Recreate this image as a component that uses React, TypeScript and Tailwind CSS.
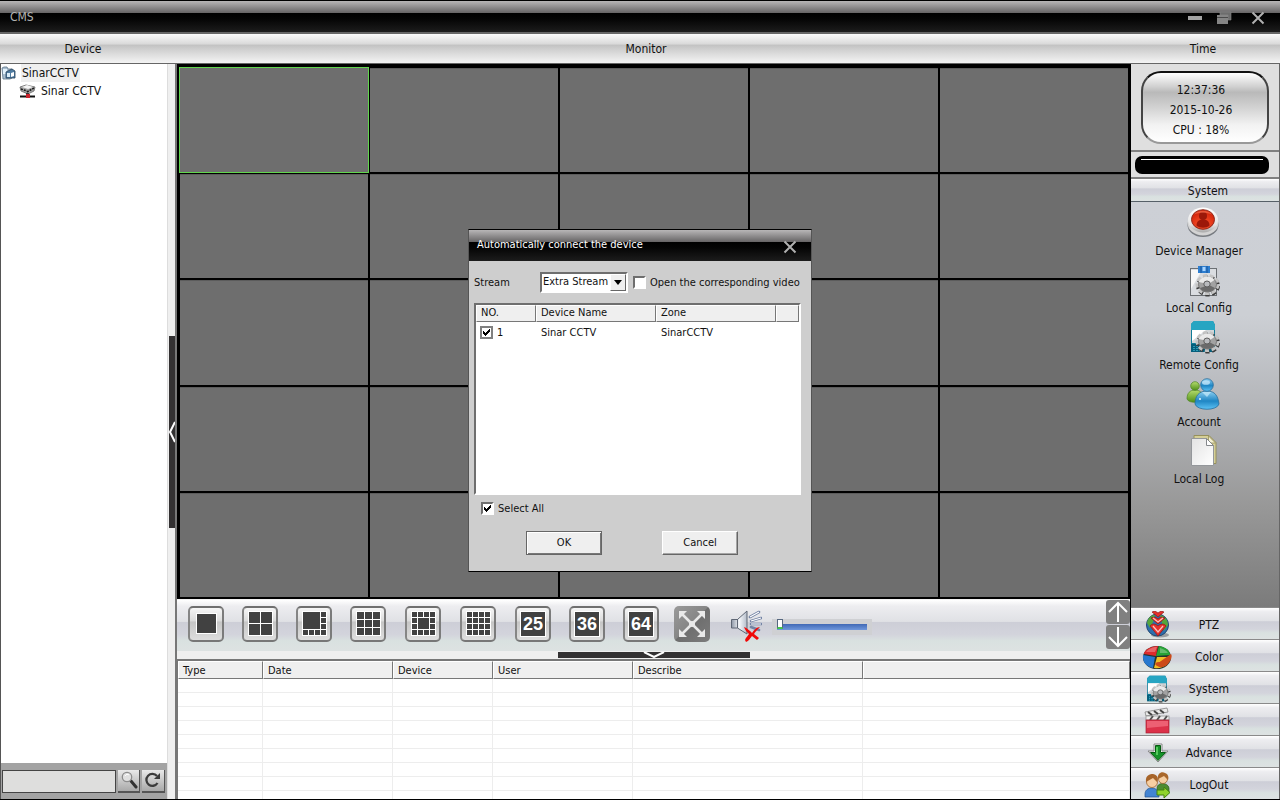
import type { ReactNode } from "react";

const steel =
  "bg-[linear-gradient(to_bottom,#ffffff_0%,#ededf0_12%,#e0e1e5_42%,#cdced7_44%,#d3d4dc_68%,#d9e1e0_80%,#dde2e2_100%)]";

function Check({ id, on = false, tone = "sunken" }: { id: string; on?: boolean; tone?: "sunken" | "flat" }) {
  const edge =
    tone === "flat"
      ? "border-2 border-[#808080]"
      : "border-2 border-t-[#6e6e6e] border-l-[#6e6e6e] border-r-white border-b-white";
  return (
    <span className="relative inline-flex h-[13px] w-[13px] shrink-0">
      <input
        id={id}
        type="checkbox"
        defaultChecked={on}
        className={"peer h-[13px] w-[13px] appearance-none bg-white " + edge}
      />
      <svg
        viewBox="0 0 13 13"
        shapeRendering="crispEdges"
        className="pointer-events-none absolute inset-0 hidden h-[13px] w-[13px] peer-checked:block"
      >
        <path d="M3 5h1v1h1v1h1v-1h1v-1h1v-1h1v-1h1v3h-1v1h-1v1h-1v1h-1v1h-1v-1h-1v-1h-1z" fill="#000" />
      </svg>
    </span>
  );
}

function DeviceManagerIcon() {
  return (
    <svg viewBox="0 0 34 34" className="h-[34px] w-[34px]">
      <defs>
        <linearGradient id="dmRing" x1="0" y1="0" x2="0" y2="1">
          <stop offset="0" stopColor="#fff" />
          <stop offset="0.7" stopColor="#e2e2e2" />
          <stop offset="1" stopColor="#a8a8a8" />
        </linearGradient>
        <radialGradient id="dmRed" cx="0.5" cy="0.75" r="0.7">
          <stop offset="0" stopColor="#ff5a30" />
          <stop offset="1" stopColor="#d02008" />
        </radialGradient>
      </defs>
      <ellipse cx="17" cy="19" rx="15.500" ry="12" fill="#777b80" />
      <ellipse cx="17" cy="17" rx="15.500" ry="12.500" fill="#d3d3d3" />
      <ellipse cx="17" cy="14" rx="15" ry="12.500" fill="url(#dmRing)" />
      <ellipse cx="17" cy="13.500" rx="11.500" ry="9.800" fill="url(#dmRed)" stroke="#8f2a1c" />
      <circle cx="17" cy="10" r="4" fill="#9c1809" />
      <path d="M10.500 19.500c0-4 2.500-6 6.500-6s6.500 2 6.500 6c-3 3-10 3-13 0z" fill="#9c1809" />
      <path d="M8 8.500c3-5 15-5 18 0-5-2.500-13-2.500-18 0z" fill="#ff8a68" opacity="0.5" />
    </svg>
  );
}

function Gear() {
  return (
    <g>
      <ellipse cx="22" cy="23" rx="10" ry="8.500" fill="none" stroke="#3c3c3c" strokeWidth="4" strokeDasharray="4 2.500" />
      <ellipse cx="21.500" cy="21.500" rx="10" ry="8.500" fill="none" stroke="#c4c4c4" strokeWidth="4" strokeDasharray="4 2.500" />
      <ellipse cx="21.500" cy="21.500" rx="9" ry="7.500" fill="#a2a2a2" stroke="#787878" />
      <path d="M12.500 19c2-6 12-8 16-2l-6 4-5-1z" fill="#e9e9e9" />
      <path d="M14 25c3 5 12 5 15 0l-6-3z" fill="#6a6a6a" />
      <ellipse cx="21" cy="21" rx="3.200" ry="3" fill="#b9bbbe" stroke="#5e5e5e" />
    </g>
  );
}

function LocalConfigIcon() {
  return (
    <svg viewBox="0 0 34 34" className="h-[34px] w-[34px]">
      <rect x="4.500" y="5.500" width="26" height="27" fill="#dadde1" stroke="#6c7074" />
      <path d="M5 7h11L5 26z" fill="#f7f7f7" />
      <rect x="14" y="1" width="8" height="4" fill="#c4c9cf" />
      <rect x="12" y="3" width="12" height="7" fill="#2d7ed0" />
      <path d="M15 3v7M21 3v7" stroke="#185398" />
      <rect x="16.500" y="4" width="3" height="4" fill="#a8d4ff" />
      <Gear />
    </svg>
  );
}

function RemoteConfigIcon({ small = false }: { small?: boolean }) {
  return (
    <svg viewBox="0 0 34 34" className={small ? "h-[28px] w-[30px]" : "h-[34px] w-[34px]"}>
      <path d="M5 4l3-3h19l2 4v26H5z" fill="#107c98" />
      <path d="M8 1h19l2 4v5H5V4z" fill="#27a5c2" />
      <path d="M6 10h22v13H6z" fill="#d2d7da" />
      <path d="M6 10h14L6 21z" fill="#fff" />
      <path d="M5 24h23v8H5z" fill="#055f7c" />
      <path d="M8 26v5M11 26v5M14 26v5" stroke="#55d6ee" strokeDasharray="1 1" />
      <Gear />
    </svg>
  );
}

function AccountIcon() {
  return (
    <svg viewBox="0 0 34 34" className="h-[34px] w-[34px]">
      <defs>
        <linearGradient id="acBlue" x1="0" y1="0" x2="0" y2="1">
          <stop offset="0" stopColor="#8fd0f2" />
          <stop offset="0.55" stopColor="#1f86c4" />
          <stop offset="1" stopColor="#5dc3f5" />
        </linearGradient>
        <linearGradient id="acGreen" x1="0" y1="0" x2="0" y2="1">
          <stop offset="0" stopColor="#b5dc6e" />
          <stop offset="1" stopColor="#4f8f17" />
        </linearGradient>
      </defs>
      <path d="M1 22c0-6 3-9 8-9s8 3 8 8c0 5-14 6-16 1z" fill="url(#acGreen)" stroke="#4c8420" strokeWidth="0.700" />
      <circle cx="9" cy="9" r="4.300" fill="url(#acGreen)" stroke="#4c8420" strokeWidth="0.700" />
      <path d="M9 27c0-8 4-13 12-13s11 5 12 13c-2 7-22 7-24 0z" fill="url(#acBlue)" stroke="#276d9c" strokeWidth="0.800" />
      <circle cx="21" cy="8" r="6.300" fill="url(#acBlue)" stroke="#276d9c" strokeWidth="0.800" />
      <ellipse cx="20" cy="5.500" rx="4" ry="2.300" fill="#d4f0ff" opacity="0.700" />
      <path d="M16 15l5 5 4-5z" fill="#c9ebfb" opacity="0.700" />
      <circle cx="14" cy="22" r="1" fill="#e9f8ff" />
    </svg>
  );
}

function LocalLogIcon() {
  return (
    <svg viewBox="0 0 34 34" className="h-[34px] w-[34px]">
      <defs>
        <linearGradient id="logPage" x1="0" y1="0" x2="1" y2="1">
          <stop offset="0" stopColor="#e3e3e3" />
          <stop offset="1" stopColor="#ffffff" />
        </linearGradient>
      </defs>
      <path d="M8 1.500h15l7 7v21H8z" fill="#d5cf97" stroke="#96905c" />
      <path d="M22.500 2v7h7z" fill="#f3f0d2" stroke="#96905c" strokeWidth="0.800" />
      <path d="M5.500 4.500h15l7 7v20h-22z" fill="url(#logPage)" stroke="#94979b" />
      <path d="M20.500 4.500v7h7z" fill="#fff" stroke="#85888c" />
    </svg>
  );
}

function PtzIcon() {
  return (
    <svg viewBox="0 0 28 28" className="h-[28px] w-[30px]">
      <ellipse cx="17" cy="24" rx="9" ry="2.500" fill="#9a9da0" />
      <circle cx="14.500" cy="14" r="11" fill="#2c6fae" stroke="#24476e" />
      <path d="M4 12c1-6 5-8 8-8l-2 7-3 6zM17 4c5 1 8 5 8 10l-4 6-2-8z" fill="#55a53c" />
      <g fill="#e6302c" stroke="#8f1713" strokeWidth="0.700">
        <path d="M9 1l3-1 3 2 3-2 3 1-6 5z" />
        <path d="M8 7l4-1 3 2 3-2 4 1-7 6z" />
        <path d="M7 15c2-3 6-2 8 0 2-2 6-3 8 0l-8 10z" />
      </g>
      <path d="M10 7l5 4 5-4M10 15l5 6 5-6" fill="none" stroke="#ffc1bb" strokeWidth="1.300" />
    </svg>
  );
}

function ColorIcon() {
  return (
    <svg viewBox="0 0 30 28" className="h-[28px] w-[30px]">
      <ellipse cx="15" cy="14.500" rx="14" ry="11.500" fill="#26332f" />
      <path d="M14 13L2 11c0-4 7-8 14-8z" fill="#df2a2c" />
      <path d="M14 13l3-10c6 1 11 4 11 9z" fill="#27a336" />
      <path d="M13 14L1 12c-1 7 4 12 10 13z" fill="#2778cf" />
      <path d="M15 14l-3 11c5 1 10-1 13-4l1-7z" fill="#f0be23" />
      <path d="M13 21c2-3 4-1 6-3l10-7c2 3-1 8-4 11-4 3-9 3-12-1z" fill="#cc4a19" />
      <path d="M4 9c2-3 7-5 11-5l-2 5zM18 5c4 1 7 3 8 5l-8 0z" fill="#fff" opacity="0.280" />
    </svg>
  );
}

function PlaybackIcon() {
  return (
    <svg viewBox="0 0 28 28" className="h-[28px] w-[30px]">
      <path d="M2 5l22-4 1 4L3 9z" fill="#ececec" stroke="#777" strokeWidth="0.700" />
      <path d="M5 5l4 3M11 4l4 3M17 3l4 3" stroke="#444" strokeWidth="2" />
      <rect x="3" y="9" width="23" height="4" fill="#eee" stroke="#888" strokeWidth="0.700" />
      <path d="M7 13l3-4M14 13l3-4M21 13l3-4" stroke="#555" strokeWidth="2" />
      <rect x="3" y="13" width="23" height="13" fill="#dc3149" stroke="#a12334" strokeWidth="0.700" />
      <path d="M4 14h21v5L4 21z" fill="#f47586" opacity="0.700" />
    </svg>
  );
}

function AdvanceIcon() {
  return (
    <svg viewBox="0 0 28 28" className="h-[28px] w-[30px]">
      <path d="M11 5h8v7h6l-10 11L5 12h6z" fill="#f4f4f4" stroke="#888" />
      <path d="M12.500 6.500h5v7h5L15 21.500l-7.500-8h5z" fill="#159229" stroke="#075b12" />
      <path d="M14 8v8" fill="none" stroke="#68dd6c" strokeWidth="1.500" />
    </svg>
  );
}

function LogoutIcon() {
  return (
    <svg viewBox="0 0 28 28" className="h-[28px] w-[30px]">
      <path d="M14 17c0-6 11-6 12 0v4H14z" fill="#4e8b32" stroke="#2e601f" strokeWidth="0.700" />
      <circle cx="20" cy="8" r="4.500" fill="#f5cda0" stroke="#94571d" strokeWidth="0.700" />
      <path d="M15 8c-1-6 4-8 7-6 3 1 4 4 3 7l-4-4z" fill="#a9672b" />
      <path d="M2 23c0-8 13-8 14 0v3H2z" fill="#4285d2" stroke="#235591" strokeWidth="0.700" />
      <circle cx="9" cy="11" r="5.500" fill="#f8cfa3" stroke="#94571d" strokeWidth="0.700" />
      <path d="M3 11c-1-7 4-8 7-8 5 1 6 5 4 8l-4-4z" fill="#a7642a" />
      <path d="M14 19h7v-3l6 5.500-6 5.500v-3h-7z" fill="#8fd32c" stroke="#42810e" />
    </svg>
  );
}

function Frame({ label, children }: { label: string; children: ReactNode }) {
  return (
    <button
      type="button"
      aria-label={label}
      className="flex h-[36px] w-[36px] shrink-0 items-center justify-center rounded-[5px] border-2 border-t-[#6f6f6f] border-r-[#7b7b7b] border-b-[#777] border-l-[#858585] bg-[linear-gradient(to_bottom,#f6f6f6_0%,#dcdcdc_40%,#c6c6c6_44%,#dedede_100%)]"
    >
      {children}
    </button>
  );
}

function SplitIcon({ lines }: { lines: string }) {
  return (
    <svg viewBox="0 0 25 25" shapeRendering="crispEdges" className="h-[25px] w-[25px]">
      <rect x="0.500" y="0.500" width="24" height="24" fill="#414141" stroke="#fff" />
      <path d={lines} stroke="#fff" />
    </svg>
  );
}

function CountFrame({ n }: { n: number }) {
  return (
    <Frame label={`${n} windows`}>
      <span className="flex h-[26px] w-[26px] items-center justify-center border border-white bg-[#414141] font-['Liberation_Sans',sans-serif] text-[18px] leading-[20px] font-bold text-white">
        {n}
      </span>
    </Frame>
  );
}

function SpeakerIcon() {
  return (
    <svg viewBox="0 0 32 32" className="h-[32px] w-[32px]">
      <defs>
        <linearGradient id="spk" x1="0" y1="0" x2="1" y2="0">
          <stop offset="0" stopColor="#8e97a6" />
          <stop offset="0.500" stopColor="#f6f8fb" />
          <stop offset="1" stopColor="#b4bcc9" />
        </linearGradient>
      </defs>
      <path d="M1.500 9.500h6L17 1v23l-9.500-6h-6z" fill="url(#spk)" stroke="#5f6775" />
      <path d="M7.500 9v9" stroke="#5f6775" />
      <path d="M20 7l9-5M21 11l10-3M21 14h10M21 17l8 3" stroke="#7383a4" strokeWidth="2.600" strokeLinecap="round" />
      <path d="M20 7l9-5M21 11l10-3M21 14h10" stroke="#fff" strokeWidth="1.200" />
      <path d="M14 17c3 1 6 4 8 6 2-3 5-6 8-6-3 3-5 5-6 7l5 4-2 2-5-4c-2 2-3 5-6 6l-1-2c1-3 3-4 4-6-2-2-4-4-5-7z" fill="#f00808" />
    </svg>
  );
}

function ArrowButton({ down = false }: { down?: boolean }) {
  return (
    <button
      type="button"
      aria-label={down ? "Next page" : "Previous page"}
      className="flex h-[24px] w-[24px] items-center justify-center rounded-[3px] bg-[#808080]"
    >
      <svg viewBox="0 0 22 22" className="h-[22px] w-[22px]" fill="none" stroke="#fff" strokeWidth="2">
        <path d={down ? "M11 1v18M2 11l9 9 9-9" : "M11 21V3M2 11l9-9 9 9"} />
      </svg>
    </button>
  );
}

const systemItems: { label: string; icon: ReactNode }[] = [
  { label: "Device Manager", icon: <DeviceManagerIcon /> },
  { label: "Local Config", icon: <LocalConfigIcon /> },
  { label: "Remote Config", icon: <RemoteConfigIcon /> },
  { label: "Account", icon: <AccountIcon /> },
  { label: "Local Log", icon: <LocalLogIcon /> },
];

const tabs: { label: string; icon: ReactNode }[] = [
  { label: "PTZ", icon: <PtzIcon /> },
  { label: "Color", icon: <ColorIcon /> },
  { label: "System", icon: <RemoteConfigIcon small /> },
  { label: "PlayBack", icon: <PlaybackIcon /> },
  { label: "Advance", icon: <AdvanceIcon /> },
  { label: "LogOut", icon: <LogoutIcon /> },
];

const headCell =
  "border-t border-l border-t-white border-l-white border-r border-b border-r-[#777] border-b-[#777] bg-[#efefef] pl-[4px] text-left font-normal";

function TitleBar() {
  return (
    <header className="flex h-[32px] shrink-0 items-center justify-between border-t border-black bg-[linear-gradient(to_bottom,#b8b6b7_0px,#666465_12px,#000_12px,#050505_18px,#1c1c1c_31px)] pr-[15px] pl-[10px]">
      <h1 className="text-[12px] leading-[16px] text-[#b4b4b4]">CMS</h1>
      <div className="flex items-center gap-[14px] pt-[2px]">
        <button type="button" aria-label="Minimize">
          <svg viewBox="0 0 16 14" className="h-[14px] w-[16px]">
            <rect x="2" y="5" width="14" height="4" fill="#a3a3a3" />
          </svg>
        </button>
        <button type="button" aria-label="Restore">
          <svg viewBox="0 0 16 14" className="h-[14px] w-[16px]">
            <path d="M4 1h11v8h-3V4H4z" fill="#6d6d6d" stroke="#8c8c8c" strokeWidth="0.600" />
            <rect x="1" y="4" width="11" height="9" fill="#858585" />
            <path d="M1 6.500h11" stroke="#4a4a4a" />
          </svg>
        </button>
        <button type="button" aria-label="Close" className="ml-[5px]">
          <svg viewBox="0 0 14 14" className="h-[14px] w-[14px]">
            <path d="M1.500 1.500l11 11M12.500 1.500l-11 11" stroke="#b0b0b0" strokeWidth="2" />
          </svg>
        </button>
      </div>
    </header>
  );
}

function DevicePanel() {
  return (
    <aside className="flex w-[167px] shrink-0 flex-col border-l border-[#555] bg-white">
      <ul className="flex-1 leading-[18px]">
        <li className="flex items-center gap-1">
          <svg viewBox="0 0 16 16" className="h-[16px] w-[16px]">
            <path d="M1 3l2-1h3l1 2h4v9l-2 1H2z" fill="#a9bfd1" stroke="#5b7186" strokeWidth="0.800" />
            <path d="M2 4h4v5H2z" fill="#e3f1fb" />
            <path d="M5 7l6-3 3 2v7H5z" fill="#4f7ba0" stroke="#29435b" strokeWidth="0.800" />
            <path d="M6 8h3v4H6z" fill="#d9ebf7" />
            <path d="M10 8l3-1v4l-3 1z" fill="#fff" />
          </svg>
          <span className="bg-[#efefef] px-px">SinarCCTV</span>
        </li>
        <li className="flex items-center gap-1 pl-[18px]">
          <svg viewBox="0 0 17 16" className="h-[16px] w-[17px]">
            <path d="M1 4l6-2 9 2-1 4-6 3-7-3z" fill="#a4a4a4" stroke="#666" strokeWidth="0.800" />
            <path d="M3 4l5-2 6 2-5 2z" fill="#f4f4f4" />
            <path d="M2 6l6 2M8 9l7-4" stroke="#1b1b1b" strokeWidth="1.500" strokeDasharray="2 1" />
            <path d="M8.500 10v3" stroke="#333" strokeWidth="3" />
            <path d="M1 13.500h15" stroke="#111" strokeWidth="2" />
            <rect x="7" y="11" width="4" height="4" fill="#c8232c" />
          </svg>
          <span className="px-px">Sinar CCTV</span>
        </li>
      </ul>
      <form className="flex h-[36px] items-center gap-[2px] bg-[#a3a3a3] pr-[2px] pl-px" onSubmit={(e) => e.preventDefault()}>
        <input
          type="text"
          aria-label="Search devices"
          className="h-[23px] min-w-0 flex-1 border border-[#444] bg-[#dededd] px-1"
        />
        <button
          type="submit"
          aria-label="Search"
          className="flex h-[23px] w-[22px] items-center justify-center border-r border-b-2 border-[#555] bg-linear-to-b from-[#e9e9e9] to-[#a9a9a9]"
        >
          <svg viewBox="0 0 18 18" className="h-[18px] w-[18px]">
            <path d="M11 10l5 6" stroke="#333" strokeWidth="3" strokeLinecap="round" />
            <circle cx="7" cy="6" r="4.700" fill="#e0e0e0" stroke="#8c8c8c" strokeWidth="1.300" />
            <path d="M5 5c1-2 3-2 4-1" fill="none" stroke="#fff" />
          </svg>
        </button>
        <button
          type="button"
          aria-label="Refresh"
          className="flex h-[23px] w-[23px] items-center justify-center border-r border-b-2 border-[#555] bg-linear-to-b from-[#e9e9e9] to-[#a9a9a9]"
        >
          <svg viewBox="0 0 18 18" className="h-[18px] w-[18px]">
            <path d="M13.500 12A6 6 0 1 1 13 5" fill="none" stroke="#3c3c3c" strokeWidth="2.300" />
            <path d="M16 2v6h-6z" fill="#3c3c3c" />
          </svg>
        </button>
      </form>
    </aside>
  );
}

function VideoGrid() {
  return (
    <div className="grid min-h-0 flex-1 grid-cols-5 grid-rows-5 gap-[2px] bg-black pt-[4px] pr-[2px] pb-[2px] pl-[3px]">
      {Array.from({ length: 25 }, (_, i) => (
        <div
          key={i}
          className={
            i === 0 ? "bg-[#6e6e6e] outline-1 outline-[#62d64e]" : "border-t border-[#5c5c5c] bg-[#6e6e6e]"
          }
        />
      ))}
    </div>
  );
}

function Toolbar() {
  return (
    <div className={"flex h-[52px] shrink-0 items-start border-t border-[#f4f4f4] pl-[11px] " + steel}>
      <div className="flex flex-1 items-center pt-[5px]">
        <div className="mr-[19px] flex gap-[18px]">
          <Frame label="1 window">
            <span className="h-[21px] w-[21px] border border-white bg-[#414141]" />
          </Frame>
          <Frame label="4 windows">
            <SplitIcon lines="M12.500 1v23M1 12.500h23" />
          </Frame>
          <Frame label="8 windows">
            <SplitIcon lines="M18.500 1v23M1 18.500h23M6.500 18v6M12.500 18v6M18 6.500h6M18 12.500h6" />
          </Frame>
          <Frame label="9 windows">
            <SplitIcon lines="M8.500 1v23M16.500 1v23M1 8.500h23M1 16.500h23" />
          </Frame>
        </div>
        <div className="mr-[18px] flex gap-[19px]">
          <Frame label="13 windows">
            <SplitIcon lines="M6.500 1v23M18.500 1v23M1 6.500h23M1 18.500h23M12.500 1v6M12.500 18v6M1 12.500h6M18 12.500h6" />
          </Frame>
          <Frame label="16 windows">
            <SplitIcon lines="M6.500 1v23M12.500 1v23M18.500 1v23M1 6.500h23M1 12.500h23M1 18.500h23" />
          </Frame>
          <CountFrame n={25} />
        </div>
        <div className="mr-[15px] flex gap-[18px]">
          <CountFrame n={36} />
          <CountFrame n={64} />
        </div>
        <button
          type="button"
          aria-label="Full screen"
          className="flex h-[36px] w-[36px] items-center justify-center rounded-[5px] bg-[linear-gradient(135deg,#9a9a9a_0%,#868686_48%,#6e6e6e_50%,#7c7c7c_100%)]"
        >
          <svg viewBox="0 0 30 30" className="h-[30px] w-[30px]">
            <path d="M4 4l22 22M26 4L4 26" stroke="#e9e9e9" strokeWidth="2.500" />
            <path d="M2 2h8L8 4l-4 4-2 2zM28 2v8l-2-2-4-4-2-2zM2 28v-8l2 2 4 4 2 2zM28 28h-8l2-2 4-4 2-2z" fill="#e9e9e9" />
            <circle cx="15" cy="15" r="3" fill="#e9e9e9" />
          </svg>
        </button>
        <button type="button" aria-label="Mute" className="ml-[20px] pt-[5px]">
          <SpeakerIcon />
        </button>
        <span className="mt-[6px] ml-[10px] flex h-[16px] w-[100px] items-center bg-[#cfd0d3] px-[5px]">
          <input
            type="range"
            aria-label="Volume"
            defaultValue={0}
            className="h-[6px] w-full appearance-none bg-linear-to-b from-[#4169b5] to-[#6f97dc] [&::-webkit-slider-thumb]:h-[10px] [&::-webkit-slider-thumb]:w-[6px] [&::-webkit-slider-thumb]:-translate-y-[3px] [&::-webkit-slider-thumb]:appearance-none [&::-webkit-slider-thumb]:border [&::-webkit-slider-thumb]:border-b-2 [&::-webkit-slider-thumb]:border-[#56677f] [&::-webkit-slider-thumb]:border-b-[#45c94a] [&::-webkit-slider-thumb]:bg-white"
          />
        </span>
      </div>
      <div className="flex flex-col gap-px">
        <ArrowButton />
        <ArrowButton down />
      </div>
    </div>
  );
}

function EventLog() {
  return (
    <div className="h-[140px] shrink-0 overflow-hidden border-t-2 border-l border-[#777] bg-white">
      <table className="w-full table-fixed border-separate border-spacing-0 text-[11px] leading-[15px]">
        <colgroup>
          <col className="w-[85px]" />
          <col className="w-[130px]" />
          <col className="w-[100px]" />
          <col className="w-[140px]" />
          <col className="w-[230px]" />
          <col />
        </colgroup>
        <thead>
          <tr className="h-[18px]">
            {["Type", "Date", "Device", "User", "Describe", ""].map((h) => (
              <th key={h} scope="col" className={headCell}>
                {h}
              </th>
            ))}
          </tr>
        </thead>
        <tbody>
          {Array.from({ length: 9 }, (_, r) => (
            <tr key={r} className="h-[14px]">
              {Array.from({ length: 6 }, (_, c) => (
                <td key={c} className="border-r border-b border-[#ededed]" />
              ))}
            </tr>
          ))}
        </tbody>
      </table>
    </div>
  );
}

function SidePanel() {
  return (
    <aside className="flex w-[150px] shrink-0 flex-col border-r border-l border-r-[#666] border-l-black">
      <div className="flex h-[88px] shrink-0 border-b-2 border-[#808080] bg-[#dfdfdf] px-[10px] pt-[7px]">
        <div className="flex h-[73px] flex-1 flex-col items-center rounded-[20px] border-2 border-t-[#111] border-r-[#444] border-b-[#999] border-l-[#444] bg-[linear-gradient(to_bottom,#ffffff_0%,#d0d0d0_20%,#b9b9b9_28%,#d2d2d2_50%,#f2f2f2_75%,#ffffff_100%)] pt-[7px] pr-[8px] leading-[20px]">
          <time>12:37:36</time>
          <span>2015-10-26</span>
          <span>CPU : 18%</span>
        </div>
      </div>
      <div className="flex h-[27px] shrink-0 items-center border-b-2 border-[#808080] bg-[#dfdfdf] pr-[10px] pl-[4px]">
        <div className="h-[18px] flex-1 rounded-[7px] bg-black px-[6px] pt-[3px]">
          <div className="h-px bg-white" />
        </div>
      </div>
      <h2
        className={"flex h-[23px] shrink-0 items-center justify-center border-b border-[#566068] pt-[2px] pl-[6px] " + steel}
      >
        System
      </h2>
      <nav className="flex min-h-0 flex-1 flex-col items-center gap-[3px] bg-[linear-gradient(to_bottom,#cdd0d6_0%,#cccfd4_28%,#b6b8bc_48%,#989898_75%,#7b7b7b_100%)] pt-[4px] pr-[12px]">
        {systemItems.map((item) => (
          <button key={item.label} type="button" className="flex flex-col items-center gap-[2px] leading-[18px]">
            <span className="pl-[8px]">{item.icon}</span>
            {item.label}
          </button>
        ))}
      </nav>
      <nav className="flex flex-col">
        {tabs.map((tab) => (
          <button
            key={tab.label}
            type="button"
            className={"flex h-[32px] items-center border-t border-[#8a8a8a] pt-[2px] pl-[11px] " + steel}
          >
            {tab.icon}
            <span className="flex-1 pr-[33px] text-center">{tab.label}</span>
          </button>
        ))}
      </nav>
    </aside>
  );
}

function ConnectDialog() {
  return (
    <div className="fixed inset-0 flex items-center justify-center">
      <section
        role="dialog"
        aria-labelledby="dialog-title"
        className="w-[344px] border border-t-black border-r-[#555] border-b-black border-l-[#555] bg-[#cecece] text-[11px] leading-[14px]"
      >
        <header className="flex h-[31px] items-center justify-between bg-[linear-gradient(to_bottom,#b8b6b7_0px,#666465_12px,#000_12px,#050505_18px,#1c1c1c_31px)] pr-[14px] pl-[8px]">
          <h2 id="dialog-title" className="text-white">
            Automatically connect the device
          </h2>
          <button type="button" aria-label="Close dialog" className="pt-[3px]">
            <svg viewBox="0 0 14 14" className="h-[14px] w-[14px]">
              <path d="M1.500 1.500l11 11M12.500 1.500l-11 11" stroke="#b0b0b0" strokeWidth="2" />
            </svg>
          </button>
        </header>
        <div className="px-[5px] pt-[11px] pb-[16px]">
          <div className="flex h-[21px] items-center">
            <label htmlFor="stream" className="w-[66px] pt-px">
              Stream
            </label>
            <span className="relative inline-flex">
              <select
                id="stream"
                defaultValue="Extra Stream"
                className="h-[21px] w-[88px] appearance-none border-2 border-t-[#6e6e6e] border-r-white border-b-white border-l-[#6e6e6e] bg-white pl-px text-[11px]"
              >
                <option>Extra Stream</option>
                <option>Main Stream</option>
              </select>
              <span className="pointer-events-none absolute top-[2px] right-[2px] flex h-[17px] w-[16px] items-center justify-center border border-t-white border-r-[#666] border-b-[#666] border-l-white bg-[#efefef]">
                <svg viewBox="0 0 8 5" className="h-[5px] w-[8px]">
                  <path d="M0 0h8L4 5z" fill="#000" />
                </svg>
              </span>
            </span>
            <span className="ml-[5px] inline-flex">
              <Check id="open-video" />
            </span>
            <label htmlFor="open-video" className="ml-[4px] pt-px whitespace-nowrap">
              Open the corresponding video
            </label>
          </div>
          <div className="mt-[10px] mr-[5px] h-[192px] border-2 border-t-[#6e6e6e] border-r-white border-b-white border-l-[#6e6e6e] bg-white">
            <table className="w-full table-fixed border-separate border-spacing-0">
              <colgroup>
                <col className="w-[60px]" />
                <col className="w-[120px]" />
                <col className="w-[120px]" />
                <col />
              </colgroup>
              <thead>
                <tr className="h-[17px]">
                  {["NO.", "Device Name", "Zone", ""].map((h) => (
                    <th key={h} scope="col" className={headCell}>
                      {h}
                    </th>
                  ))}
                </tr>
              </thead>
              <tbody>
                <tr className="h-[22px]">
                  <td className="pl-[4px]">
                    <span className="flex items-center gap-[4px]">
                      <Check id="row-1" on tone="flat" />
                      <label htmlFor="row-1">1</label>
                    </span>
                  </td>
                  <td className="pl-[5px]">Sinar CCTV</td>
                  <td className="pl-[5px]">SinarCCTV</td>
                  <td />
                </tr>
              </tbody>
            </table>
          </div>
          <div className="mt-[7px] ml-[7px] flex items-center gap-[4px]">
            <Check id="select-all" on />
            <label htmlFor="select-all">Select All</label>
          </div>
          <div className="mt-[15px] flex gap-[60px] pl-[52px]">
            <button
              type="button"
              className="h-[24px] w-[76px] border border-[#666] bg-[#efefef] shadow-[inset_1px_1px_0_#fff,inset_-1px_-1px_0_#777]"
            >
              OK
            </button>
            <button
              type="button"
              className="h-[24px] w-[76px] border border-t-white border-r-[#666] border-b-[#666] border-l-white bg-[#efefef] shadow-[inset_-1px_-1px_0_#a5a5a5]"
            >
              Cancel
            </button>
          </div>
        </div>
      </section>
    </div>
  );
}

export default function App() {
  return (
    <div className="flex h-screen flex-col overflow-hidden border-b border-black bg-[#efefef] font-['DejaVu_Sans_Condensed','DejaVu_Sans',sans-serif] text-[12px] text-[#111]">
      <TitleBar />
      <div className="grid h-[32px] shrink-0 grid-cols-[166px_1fr_154px] items-center border-t-2 border-b border-[#666] bg-[linear-gradient(to_bottom,#fafafa_0%,#d9d9d9_35%,#c2c2c2_38%,#d5d5d5_60%,#f4f4f4_100%)] text-center">
        <span>Device</span>
        <span>Monitor</span>
        <span>Time</span>
      </div>
      <div className="flex min-h-0 flex-1">
        <DevicePanel />
        <div className="flex w-[10px] shrink-0 items-center border-r-2 border-l border-r-[#777] border-l-[#ddd] bg-[#efefef] pl-px">
          <button
            type="button"
            aria-label="Collapse device panel"
            className="flex h-[192px] w-[6px] items-center bg-[#333132]"
          >
            <svg viewBox="0 0 6 22" className="h-[22px] w-[6px]" fill="none" stroke="#fff" strokeWidth="2">
              <path d="M6 1L1 11l5 10" />
            </svg>
          </button>
        </div>
        <main className="flex min-w-0 flex-1 flex-col">
          <VideoGrid />
          <Toolbar />
          <div className="flex h-[8px] shrink-0 items-center justify-center bg-[#efefef]">
            <button
              type="button"
              aria-label="Collapse event log"
              className="flex h-[6px] w-[192px] items-center justify-center bg-[#333132]"
            >
              <svg viewBox="0 0 22 6" className="h-[6px] w-[22px]" fill="none" stroke="#fff" strokeWidth="2">
                <path d="M1 0l10 5 10-5" />
              </svg>
            </button>
          </div>
          <EventLog />
        </main>
        <SidePanel />
      </div>
      <ConnectDialog />
    </div>
  );
}
